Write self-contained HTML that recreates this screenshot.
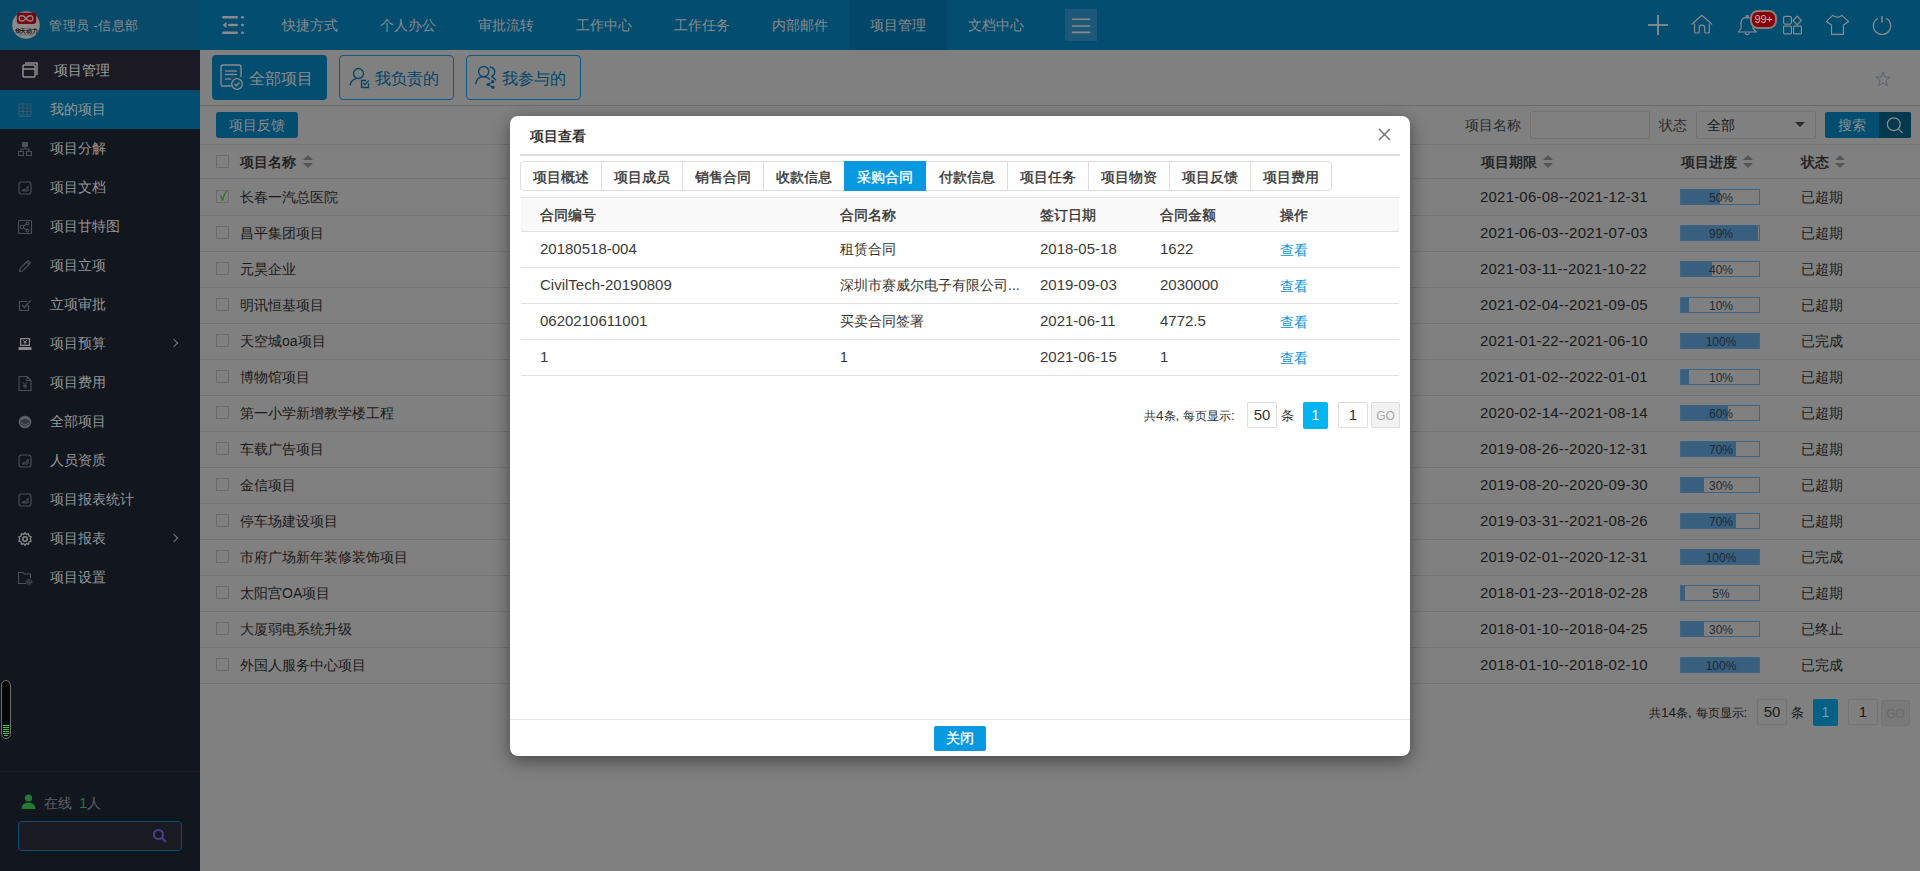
<!DOCTYPE html><html><head><meta charset="utf-8"><style>
*{box-sizing:border-box;margin:0;padding:0}
html,body{width:1920px;height:871px;overflow:hidden;background:#808080;font-family:"Liberation Sans",sans-serif;font-size:14px;color:#1a1a1a}
.a{position:absolute}
.nav{position:absolute;top:0;height:50px;width:98px;line-height:50px;text-align:center;color:#8a8a8a;font-size:14px}
.si{position:absolute;left:0;width:200px;height:39px;color:#969696;font-size:14px}
.si span{position:absolute;left:50px;top:0;line-height:39px}
.si svg{position:absolute;left:18px;top:13px}
.si .arr{position:absolute;left:171px;top:16px;width:6px;height:6px;border-right:1.5px solid #7a7a7a;border-top:1.5px solid #7a7a7a;transform:rotate(45deg)}
.hl{position:absolute;left:200px;width:1720px;height:1px;background:#737373}
.cb{position:absolute;width:13px;height:13px;border:1px solid #6b6b6b}
.row{position:absolute;left:200px;width:1720px;height:36px}
.row .n{position:absolute;left:40px;top:1px;line-height:36px}
.row .d{position:absolute;left:1280px;top:1px;line-height:36px;font-size:15px;letter-spacing:0.2px}
.row .s{position:absolute;left:1601px;top:1px;line-height:36px}
.row .cb{left:16px;top:12px}
.pb{position:absolute;left:1480px;top:11px;width:80px;height:16px;border:1px solid #3d6485}
.pb i{position:absolute;left:0;top:0;bottom:0;background:#385f7e}
.pb b{position:absolute;left:2px;right:0;top:1px;line-height:14px;text-align:center;font-weight:normal;font-size:12px;color:#1f2a33}
.sort{position:absolute;width:8px;height:14px}
.sort:before{content:"";position:absolute;left:0;top:0;border-left:5px solid transparent;border-right:5px solid transparent;border-bottom:5px solid #565656}
.sort:after{content:"";position:absolute;left:0;top:8px;border-left:5px solid transparent;border-right:5px solid transparent;border-top:5px solid #565656}
.th{position:absolute;top:1px;line-height:34px;color:#1a1a1a;-webkit-text-stroke:0.4px #1a1a1a}
#modal{position:absolute;left:510px;top:116px;width:900px;height:640px;background:#fff;border-radius:8px;box-shadow:0 5px 18px rgba(0,0,0,.45)}
.tab{position:absolute;top:0;height:29px;line-height:31px;text-align:center;color:#333;font-size:14px;-webkit-text-stroke:0.35px #333}
.mrow{position:absolute;left:11px;width:878px;height:36px;border-bottom:1px solid #e2e2e2;color:#333}
.mrow div{position:absolute;top:0;line-height:35px;font-size:15px}
.mrow .c1{left:19px;top:-1px!important;color:#3a3a3a}.mrow .c2{left:319px;font-size:14px}.mrow .c3{left:519px;top:-1px!important;color:#3a3a3a}.mrow .c4{left:639px;top:-1px!important;color:#3a3a3a}.mrow .c5{left:759px;top:1px!important;color:#0b96dd;font-size:14px}
.box{position:absolute;border:1px solid #ddd;border-radius:2px;text-align:center}
</style></head><body>
<div class="a" style="left:0;top:0;width:1920px;height:50px;background:#024d70"></div>
<div class="a" style="left:0;top:0;width:200px;height:50px;background:#084a6a"></div>
<svg class="a" style="left:12px;top:11px" width="28" height="28" viewBox="0 0 28 28">
<circle cx="14" cy="14" r="13.8" fill="#8a8a8a"/>
<rect x="4.8" y="1.8" width="19.4" height="11.2" rx="3" fill="#7a0512"/>
<path d="M14 7.4 C12 4.2 7.2 3.6 7.2 7.4 C7.2 11.2 12 10.6 14 7.4 C16 4.2 20.8 3.6 20.8 7.4 C20.8 11.2 16 10.6 14 7.4 Z" fill="none" stroke="#8c8a8a" stroke-width="1.4"/>
<text x="14" y="21.5" text-anchor="middle" font-size="6" font-weight="bold" fill="#161616" letter-spacing="-0.3">华天动力</text>
<rect x="7" y="23.2" width="14" height="1.3" fill="#5a5a5a" opacity=".6"/>
</svg>
<div class="a" style="left:49px;top:1px;line-height:50px;color:#8c8c8c;font-size:13px;letter-spacing:0.5px">管理员 -信息部</div>
<svg class="a" style="left:222px;top:16px" width="22" height="18" viewBox="0 0 22 18"><g fill="#8a8a8a"><rect x="0" y="0" width="16" height="2.6" rx="1.3"/><rect x="19" y="0" width="3" height="2.6" rx="1.3"/><rect x="6" y="7.7" width="10" height="2.6" rx="1.3"/><path d="M0.5 9 L4.5 6 L4.5 12 Z"/><rect x="19" y="7.7" width="3" height="2.6" rx="1.3"/><rect x="0" y="15.4" width="16" height="2.6" rx="1.3"/><rect x="19" y="15.4" width="3" height="2.6" rx="1.3"/></g></svg>
<div class="nav" style="left:261px;">快捷方式</div>
<div class="nav" style="left:359px;">个人办公</div>
<div class="nav" style="left:457px;">审批流转</div>
<div class="nav" style="left:555px;">工作中心</div>
<div class="nav" style="left:653px;">工作任务</div>
<div class="nav" style="left:751px;">内部邮件</div>
<div class="nav" style="left:849px;background:#02476a;">项目管理</div>
<div class="nav" style="left:947px;">文档中心</div>
<div class="a" style="left:1065px;top:9px;width:32px;height:32px;background:#1e5878"></div>
<svg class="a" style="left:1065px;top:9px" width="32" height="32" viewBox="1065 9 32 32"><g stroke="#8a8a8a" stroke-width="1.6" stroke-linecap="round"><line x1="1072.5" y1="19.3" x2="1089.7" y2="19.3"/><line x1="1072.5" y1="26" x2="1089.7" y2="26"/><line x1="1072.5" y1="32.4" x2="1089.7" y2="32.4"/></g></svg>
<svg class="a" style="left:1640px;top:5px" width="270" height="40" viewBox="1640 5 270 40">
<g fill="none" stroke="#8c8c8c" stroke-width="1.2" stroke-linejoin="round">
<line x1="1648" y1="25" x2="1668" y2="25" stroke-width="1.8"/><line x1="1658" y1="15" x2="1658" y2="35" stroke-width="1.8"/>
<path d="M1691.6 24.5 L1701.9 15.3 L1712.2 24.5"/>
<path d="M1694.6 23.5 V32 Q1694.6 33 1695.6 33 H1698.2 Q1699.2 33 1699.2 32 V27.8 Q1699.2 25.2 1701.9 25.2 Q1704.7 25.2 1704.7 27.8 V32 Q1704.7 33 1705.7 33 H1708.3 Q1709.3 33 1709.3 32 V23.5"/>
<path d="M1738.5 32 L1741 28.5 V23 Q1741 17.5 1747 17.3 Q1753 17.5 1753 23 V28.5 L1756.3 32 Z"/>
<path d="M1745 32.5 Q1745.5 34.6 1747.2 34.6 Q1749 34.6 1749.4 32.5"/>
<circle cx="1747.2" cy="16.3" r="1"/>
<rect x="1783.6" y="16.3" width="7.8" height="7.8" rx="1.5"/>
<path d="M1797.2 16.2 L1801.4 20.5 L1797.2 24.8 L1793 20.5 Z" stroke-linejoin="round"/>
<rect x="1783.6" y="26.2" width="7.8" height="7.6" rx="0.8"/>
<rect x="1793.6" y="26.2" width="7.8" height="7.6" rx="0.8"/>
<path d="M1832.8 15.4 Q1837.3 19 1841.8 15.4 L1848.6 21.4 L1843.4 25 V34.4 H1831.5 V25 L1826.4 21.4 Z"/>
<path d="M1877.8 18.2 A8.7 8.7 0 1 0 1886.3 18.2"/><line x1="1882" y1="16" x2="1882" y2="22.6" stroke-width="1.5"/>
</g></svg>
<div class="a" style="left:1750px;top:10px;width:27px;height:19px;border-radius:8px;background:#860008;border:2px solid #8a7c7c"></div>
<div class="a" style="left:1751px;top:11px;width:25px;line-height:16px;text-align:center;color:#c8bcbc;font-size:11px;letter-spacing:-0.2px">99+</div>
<div class="a" style="left:0;top:50px;width:200px;height:821px;background:#12161e"></div>
<div class="a" style="left:0;top:50px;width:200px;height:40px;background:#1b1a24"></div>
<div class="a" style="left:0;top:90px;width:200px;height:39px;background:#024d70"></div>
<div class="si" style="top:50px;height:40px;color:#a0a0a0"><span style="left:54px;line-height:40px">项目管理</span><svg style="left:22px;top:12px" width="16" height="16" viewBox="0 0 16 16"><g fill="none" stroke="#8f8f8f" stroke-width="1.5"><rect x="1" y="3" width="12" height="12" rx="1"/><path d="M3 1 H15 V13"/><line x1="1" y1="7" x2="13" y2="7"/></g></svg></div>
<div class="si" style="top:90px"><svg width="15" height="15" viewBox="0 0 15 15"><g fill="none" stroke="#3a5a6c" stroke-width="0.9"><rect x="1" y="1" width="12" height="11"/><line x1="5" y1="1" x2="5" y2="12"/><line x1="9" y1="1" x2="9" y2="12"/><line x1="1" y1="5" x2="13" y2="5"/><line x1="1" y1="8.5" x2="13" y2="8.5"/><line x1="1" y1="13.5" x2="13" y2="13.5"/></g></svg><span>我的项目</span></div>
<div class="si" style="top:129px"><svg width="15" height="15" viewBox="0 0 15 15"><g fill="none" stroke="#4b5058" stroke-width="1.1"><rect x="4.5" y="0.5" width="5" height="4" fill="#4b5058"/><path d="M7 4.5 V7 M3 10 V7 H11 V10"/><rect x="0.5" y="9.5" width="5" height="4"/><rect x="8.5" y="9.5" width="5" height="4"/></g></svg><span>项目分解</span></div>
<div class="si" style="top:168px"><svg width="15" height="15" viewBox="0 0 15 15"><g fill="none" stroke="#4b5058" stroke-width="1.1"><rect x="1" y="1" width="12" height="12" rx="2.5"/><path d="M4 10 L6 8 L7.5 9 L10 5 M10 5 V10 M4 10 H10" stroke-width="1"/></g></svg><span>项目文档</span></div>
<div class="si" style="top:207px"><svg width="15" height="15" viewBox="0 0 15 15"><g fill="none" stroke="#4b5058" stroke-width="1.1"><rect x="0.5" y="0.5" width="13" height="13" rx="1"/><circle cx="4" cy="7" r="1.8"/><circle cx="9.5" cy="3.5" r="1.4"/><circle cx="9.5" cy="10.5" r="1.4"/><path d="M5.5 6 L8.3 4.2 M5.5 8 L8.3 9.8"/></g></svg><span>项目甘特图</span></div>
<div class="si" style="top:246px"><svg width="15" height="15" viewBox="0 0 15 15"><g fill="none" stroke="#4b5058" stroke-width="1.1"><path d="M1.5 12.5 L2 9.5 L10 1.5 L12.5 4 L4.5 12 Z M8.5 3 L11 5.5"/></g></svg><span>项目立项</span></div>
<div class="si" style="top:285px"><svg width="15" height="15" viewBox="0 0 15 15"><g fill="none" stroke="#4b5058" stroke-width="1.2"><path d="M10.5 7 V12.5 H1.5 V3.5 H9"/><path d="M4 7 L6.5 9.5 L12.5 2.5"/></g></svg><span>立项审批</span></div>
<div class="si" style="top:324px"><svg width="15" height="15" viewBox="0 0 15 15"><g fill="#8a8a8a"><path d="M2 1 H12 V9 H2 Z M3.2 2.2 V7.8 H10.8 V2.2 Z"/><path d="M0.5 10 H13.5 V13 H0.5 Z"/><path d="M5 3 L7 5 L9 3 M7 5 V7.5 M5.5 5.5 H8.5" stroke="#8a8a8a" stroke-width="0.9" fill="none"/></g></svg><span>项目预算</span><div class="arr"></div></div>
<div class="si" style="top:363px"><svg width="15" height="15" viewBox="0 0 15 15"><g fill="none" stroke="#4b5058" stroke-width="1.1"><path d="M1 0.5 H9 L13 4.5 V14.5 H1 Z M9 0.5 V4.5 H13"/><path d="M4.5 6 L7 8.5 L9.5 6 M7 8.5 V12.5 M5 9.5 H9 M5 11 H9" stroke-width="0.9"/></g></svg><span>项目费用</span></div>
<div class="si" style="top:402px"><svg width="15" height="15" viewBox="0 0 15 15"><g><circle cx="7" cy="7" r="6.3" fill="#5a5e66"/><path d="M1.5 6.5 L7 3.5 L12.5 6.5 L7 9.5 Z" fill="#12161e" opacity=".55"/><path d="M2 8.5 L7 11 L12 8.5" fill="none" stroke="#12161e" stroke-width="0.9" opacity=".6"/></g></svg><span>全部项目</span></div>
<div class="si" style="top:441px"><svg width="15" height="15" viewBox="0 0 15 15"><g fill="none" stroke="#4b5058" stroke-width="1.1"><rect x="1" y="1" width="12" height="12" rx="2.5"/><path d="M4 10 L6 8 L7.5 9 L10 5 M10 5 V10 M4 10 H10" stroke-width="1"/></g></svg><span>人员资质</span></div>
<div class="si" style="top:480px"><svg width="15" height="15" viewBox="0 0 15 15"><g fill="none" stroke="#4b5058" stroke-width="1.1"><rect x="1" y="1" width="12" height="12" rx="2.5"/><path d="M4 10 L6 8 L7.5 9 L10 5 M10 5 V10 M4 10 H10" stroke-width="1"/></g></svg><span>项目报表统计</span></div>
<div class="si" style="top:519px"><svg width="15" height="15" viewBox="0 0 15 15"><g fill="none" stroke="#8a8a8a" stroke-width="1.6"><circle cx="7" cy="7" r="2.2"/><path d="M7 0.8 L8.3 2.3 L10.5 1.8 L11 4 L13.1 4.8 L12.3 7 L13.1 9.2 L11 10 L10.5 12.2 L8.3 11.7 L7 13.2 L5.7 11.7 L3.5 12.2 L3 10 L0.9 9.2 L1.7 7 L0.9 4.8 L3 4 L3.5 1.8 L5.7 2.3 Z" stroke-width="1.3"/></g></svg><span>项目报表</span><div class="arr"></div></div>
<div class="si" style="top:558px"><svg width="15" height="15" viewBox="0 0 15 15"><g fill="none" stroke="#4b5058" stroke-width="1.1"><path d="M8 12.5 H0.5 V1.5 H5 L6.5 3 H12.5 V7"/><circle cx="11" cy="11" r="1.3"/><path d="M11 7.6 V8.8 M11 13.2 V14.4 M7.6 11 H8.8 M13.2 11 H14.4 M8.6 8.6 L9.4 9.4 M12.6 12.6 L13.4 13.4 M8.6 13.4 L9.4 12.6 M12.6 9.4 L13.4 8.6" stroke-width="1.3"/></g></svg><span>项目设置</span></div>
<div class="a" style="left:1px;top:680px;width:10px;height:59px;border:1.5px solid #6e6e6e;border-radius:5px;background:#050608"></div>
<div class="a" style="left:3px;top:725px;width:6px;height:1px;background:#3cc850"></div>
<div class="a" style="left:3px;top:727px;width:6px;height:1px;background:#3cc850"></div>
<div class="a" style="left:3px;top:729px;width:6px;height:1px;background:#3cc850"></div>
<div class="a" style="left:3px;top:731px;width:6px;height:1px;background:#3cc850"></div>
<div class="a" style="left:3px;top:733px;width:6px;height:1px;background:#3cc850"></div>
<div class="a" style="left:4px;top:735px;width:4px;height:1px;background:#3cc850"></div>
<div class="a" style="left:0;top:771px;width:200px;height:1px;background:#1e1a22"></div>
<svg class="a" style="left:21px;top:794px" width="15" height="15" viewBox="0 0 15 15"><circle cx="7.5" cy="4" r="3.6" fill="#237a32"/><path d="M0.5 15 Q0.5 8.5 7.5 8.5 Q14.5 8.5 14.5 15 Z" fill="#237a32"/></svg>
<div class="a" style="left:44px;top:794px;line-height:18px;color:#5c5f66;font-size:14px">在线 <span style="color:#237a32;font-size:15px;margin-left:3px">1</span>人</div>
<div class="a" style="left:18px;top:821px;width:164px;height:30px;border:1px solid #08507a;border-radius:4px;background:#1a1a22"></div>
<svg class="a" style="left:152px;top:828px" width="16" height="16" viewBox="0 0 16 16"><circle cx="6.5" cy="6.5" r="4.6" fill="none" stroke="#4a3f8a" stroke-width="2"/><line x1="10" y1="10" x2="14" y2="14" stroke="#4a3f8a" stroke-width="2.2"/></svg>
<div class="a" style="left:212px;top:55px;width:115px;height:45px;border-radius:4px;background:#024d70"></div>
<div class="a" style="left:339px;top:55px;width:115px;height:45px;border-radius:4px;border:1.3px solid #0a5b85"></div>
<div class="a" style="left:466px;top:55px;width:115px;height:45px;border-radius:4px;border:1.3px solid #0a5b85"></div>
<div class="a" style="left:249px;top:56px;line-height:45px;font-size:16px;color:#8c8c8c">全部项目</div>
<div class="a" style="left:375px;top:56px;line-height:45px;font-size:16px;color:#02466a">我负责的</div>
<div class="a" style="left:502px;top:56px;line-height:45px;font-size:16px;color:#02466a">我参与的</div>
<svg class="a" style="left:219px;top:63px" width="28" height="28" viewBox="0 0 28 28"><g fill="none" stroke="#8c8c8c" stroke-width="1.3"><path d="M12.5 23 H4 Q2 23 2 21 V4 Q2 2 4 2 H20 Q22 2 22 4 V14"/><line x1="6" y1="8" x2="18" y2="8"/><line x1="6" y1="11.5" x2="18" y2="11.5"/><line x1="6" y1="16" x2="12" y2="16"/><circle cx="18" cy="21" r="5.3"/><path d="M15.5 21 L17.3 22.8 L20.5 19.5"/></g></svg>
<svg class="a" style="left:340px;top:60px" width="40" height="35" viewBox="340 60 40 35"><g fill="none" stroke="#02466a" stroke-width="1.3"><circle cx="358.5" cy="73.5" r="5"/><path d="M350 85.5 Q351 80 356 78.6"/><path d="M366.2 80.5 H361.5 V87.5 H368.5 V83.2"/><path d="M363.3 83.2 L364.8 84.7 L368.8 80.6"/></g></svg>
<svg class="a" style="left:466px;top:60px" width="40" height="35" viewBox="466 60 40 35"><g fill="none" stroke="#02466a" stroke-width="1.3"><circle cx="483.7" cy="71.6" r="5.1"/><path d="M475.8 84.2 Q476.5 76.8 483.7 76.7 Q487.5 76.8 490 79.8"/><path d="M489.7 67 Q494.8 67.8 494.8 72 Q494.6 75 491.7 76.6 L496.2 80.2"/><path d="M492.7 81.7 L488.1 84.5 L492.9 87.3" stroke-width="1"/></g><g fill="#02466a"><circle cx="492.7" cy="81.7" r="1.6"/><circle cx="488.1" cy="84.5" r="1.6"/><circle cx="492.9" cy="87.3" r="1.6"/></g></svg>
<div class="hl" style="top:105px;background:#6b6b6b"></div>
<svg class="a" style="left:1875px;top:71px" width="16" height="16" viewBox="0 0 16 16"><path d="M8 1 L10 6 L15 6.2 L11 9.5 L12.5 14.8 L8 11.8 L3.5 14.8 L5 9.5 L1 6.2 L6 6 Z" fill="none" stroke="#5c6470" stroke-width="1"/></svg>
<div class="a" style="left:216px;top:112px;width:82px;height:26px;border-radius:3px;background:#024d70;color:#8c8c8c;text-align:center;line-height:27px">项目反馈</div>
<div class="a" style="left:1465px;top:112px;line-height:27px;color:#2a2a2a">项目名称</div>
<div class="a" style="left:1530px;top:111px;width:120px;height:28px;border:1px solid #727272;border-radius:2px"></div>
<div class="a" style="left:1659px;top:112px;line-height:27px;color:#2a2a2a">状态</div>
<div class="a" style="left:1696px;top:111px;width:120px;height:28px;border:1px solid #727272;border-radius:2px"></div>
<div class="a" style="left:1707px;top:112px;line-height:26px;color:#1a1a1a">全部</div>
<div class="a" style="left:1795px;top:122px;border-left:5px solid transparent;border-right:5px solid transparent;border-top:5px solid #2a2a2a"></div>
<div class="a" style="left:1825px;top:112px;width:86px;height:26px;border-radius:2px;background:#024d70"></div>
<div class="a" style="left:1879px;top:112px;width:32px;height:26px;border-radius:0 2px 2px 0;background:#02394f"></div>
<div class="a" style="left:1838px;top:112px;line-height:26px;color:#8c8c8c">搜索</div>
<svg class="a" style="left:1886px;top:116px" width="18" height="19" viewBox="0 0 18 19"><circle cx="7.8" cy="8.2" r="6.4" fill="none" stroke="#8c8c8c" stroke-width="1.2"/><line x1="12.5" y1="12.9" x2="16.5" y2="17" stroke="#8c8c8c" stroke-width="1.2"/></svg>
<div class="hl" style="top:144px"></div>
<div class="row" style="top:144px;height:34px">
<div class="cb" style="left:16px;top:11px"></div>
<div class="th" style="left:40px">项目名称</div><div class="sort" style="left:103px;top:11px"></div>
<div class="th" style="left:1281px">项目期限</div><div class="sort" style="left:1343px;top:11px"></div>
<div class="th" style="left:1481px">项目进度</div><div class="sort" style="left:1543px;top:11px"></div>
<div class="th" style="left:1601px">状态</div><div class="sort" style="left:1635px;top:11px"></div>
</div>
<div class="hl" style="top:178px"></div>
<div class="row" style="top:178px"><div class="cb"><svg style="position:absolute;left:1px;top:-1px" width="11" height="13" viewBox="0 0 11 13"><path d="M2.2 6.2 Q3.4 5.6 4.6 10.6 Q6 4 8.6 0.8" fill="none" stroke="#2c7412" stroke-width="1.2"/></svg></div><div class="n">长春一汽总医院</div><div class="d">2021-06-08--2021-12-31</div><div class="pb"><i style="width:39.0px"></i><b>50%</b></div><div class="s">已超期</div></div>
<div class="hl" style="top:215px"></div>
<div class="row" style="top:214px"><div class="cb"></div><div class="n">昌平集团项目</div><div class="d">2021-06-03--2021-07-03</div><div class="pb"><i style="width:77.2px"></i><b>99%</b></div><div class="s">已超期</div></div>
<div class="hl" style="top:251px"></div>
<div class="row" style="top:250px"><div class="cb"></div><div class="n">元昊企业</div><div class="d">2021-03-11--2021-10-22</div><div class="pb"><i style="width:31.2px"></i><b>40%</b></div><div class="s">已超期</div></div>
<div class="hl" style="top:287px"></div>
<div class="row" style="top:286px"><div class="cb"></div><div class="n">明讯恒基项目</div><div class="d">2021-02-04--2021-09-05</div><div class="pb"><i style="width:7.8px"></i><b>10%</b></div><div class="s">已超期</div></div>
<div class="hl" style="top:323px"></div>
<div class="row" style="top:322px"><div class="cb"></div><div class="n">天空城oa项目</div><div class="d">2021-01-22--2021-06-10</div><div class="pb"><i style="width:78.0px"></i><b>100%</b></div><div class="s">已完成</div></div>
<div class="hl" style="top:359px"></div>
<div class="row" style="top:358px"><div class="cb"></div><div class="n">博物馆项目</div><div class="d">2021-01-02--2022-01-01</div><div class="pb"><i style="width:7.8px"></i><b>10%</b></div><div class="s">已超期</div></div>
<div class="hl" style="top:395px"></div>
<div class="row" style="top:394px"><div class="cb"></div><div class="n">第一小学新增教学楼工程</div><div class="d">2020-02-14--2021-08-14</div><div class="pb"><i style="width:46.8px"></i><b>60%</b></div><div class="s">已超期</div></div>
<div class="hl" style="top:431px"></div>
<div class="row" style="top:430px"><div class="cb"></div><div class="n">车载广告项目</div><div class="d">2019-08-26--2020-12-31</div><div class="pb"><i style="width:54.6px"></i><b>70%</b></div><div class="s">已超期</div></div>
<div class="hl" style="top:467px"></div>
<div class="row" style="top:466px"><div class="cb"></div><div class="n">金信项目</div><div class="d">2019-08-20--2020-09-30</div><div class="pb"><i style="width:23.4px"></i><b>30%</b></div><div class="s">已超期</div></div>
<div class="hl" style="top:503px"></div>
<div class="row" style="top:502px"><div class="cb"></div><div class="n">停车场建设项目</div><div class="d">2019-03-31--2021-08-26</div><div class="pb"><i style="width:54.6px"></i><b>70%</b></div><div class="s">已超期</div></div>
<div class="hl" style="top:539px"></div>
<div class="row" style="top:538px"><div class="cb"></div><div class="n">市府广场新年装修装饰项目</div><div class="d">2019-02-01--2020-12-31</div><div class="pb"><i style="width:78.0px"></i><b>100%</b></div><div class="s">已完成</div></div>
<div class="hl" style="top:575px"></div>
<div class="row" style="top:574px"><div class="cb"></div><div class="n">太阳宫OA项目</div><div class="d">2018-01-23--2018-02-28</div><div class="pb"><i style="width:3.9px"></i><b>5%</b></div><div class="s">已超期</div></div>
<div class="hl" style="top:611px"></div>
<div class="row" style="top:610px"><div class="cb"></div><div class="n">大厦弱电系统升级</div><div class="d">2018-01-10--2018-04-25</div><div class="pb"><i style="width:23.4px"></i><b>30%</b></div><div class="s">已终止</div></div>
<div class="hl" style="top:647px"></div>
<div class="row" style="top:646px"><div class="cb"></div><div class="n">外国人服务中心项目</div><div class="d">2018-01-10--2018-02-10</div><div class="pb"><i style="width:78.0px"></i><b>100%</b></div><div class="s">已完成</div></div>
<div class="hl" style="top:683px"></div>
<div class="a" style="left:1649px;top:704px;line-height:18px;font-size:12px;color:#1a1a1a">共<span style="font-size:13.5px">14</span>条<span style="font-size:13.5px">, </span>每页显示<span style="font-size:13.5px">:</span></div>
<div class="box" style="left:1757px;top:699px;width:30px;height:26px;border-color:#747474;line-height:24px;font-size:15px;color:#1a1a1a">50</div>
<div class="a" style="left:1791px;top:704px;line-height:18px;font-size:13px;color:#1a1a1a">条</div>
<div class="box" style="left:1813px;top:699px;width:25px;height:27px;border:none;background:#026185;line-height:27px;font-size:14px;color:#7c9aa8">1</div>
<div class="box" style="left:1848px;top:699px;width:30px;height:26px;border-color:#747474;line-height:24px;font-size:15px;color:#1a1a1a">1</div>
<div class="box" style="left:1881px;top:700px;width:29px;height:26px;border-color:#747474;background:#797979;line-height:26px;font-size:12px;color:#6a6a6a">GO</div>
<div id="modal">
<div class="a" style="left:20px;top:0;line-height:40px;font-size:14px;color:#222;-webkit-text-stroke:0.4px #222">项目查看</div>
<svg class="a" style="left:868px;top:12px" width="13" height="13" viewBox="0 0 13 13"><path d="M1 1 L12 12 M12 1 L1 12" stroke="#747474" stroke-width="1.5"/></svg>
<div class="a" style="left:10px;top:38px;width:880px;height:2px;background:#ddd"></div>
<div class="a" style="left:10px;top:45px;width:812px;height:30px;border:1px solid #ddd;border-radius:4px"></div>
<div class="tab" style="left:10px;top:46px;width:81px;">项目概述</div>
<div class="tab" style="left:91px;top:46px;width:81px;">项目成员</div>
<div class="a" style="left:91px;top:46px;width:1px;height:29px;background:#ddd"></div>
<div class="tab" style="left:172px;top:46px;width:81px;">销售合同</div>
<div class="a" style="left:172px;top:46px;width:1px;height:29px;background:#ddd"></div>
<div class="tab" style="left:253px;top:46px;width:81px;">收款信息</div>
<div class="a" style="left:253px;top:46px;width:1px;height:29px;background:#ddd"></div>
<div class="tab" style="left:334px;top:45px;width:82px;height:30px;line-height:32px;background:#0899e0;color:#fff;-webkit-text-stroke:0.35px #fff">采购合同</div>
<div class="tab" style="left:416px;top:46px;width:81px;">付款信息</div>
<div class="tab" style="left:497px;top:46px;width:81px;">项目任务</div>
<div class="a" style="left:497px;top:46px;width:1px;height:29px;background:#ddd"></div>
<div class="tab" style="left:578px;top:46px;width:81px;">项目物资</div>
<div class="a" style="left:578px;top:46px;width:1px;height:29px;background:#ddd"></div>
<div class="tab" style="left:659px;top:46px;width:81px;">项目反馈</div>
<div class="a" style="left:659px;top:46px;width:1px;height:29px;background:#ddd"></div>
<div class="tab" style="left:740px;top:46px;width:81px;">项目费用</div>
<div class="a" style="left:740px;top:46px;width:1px;height:29px;background:#ddd"></div>
<div class="a" style="left:11px;top:81px;width:878px;height:35px;background:#f9f9f9;border-top:1px solid #e2e2e2;border-bottom:1px solid #e2e2e2"></div>
<div class="a" style="left:30px;top:82px;line-height:35px;color:#333;-webkit-text-stroke:0.35px #333">合同编号</div>
<div class="a" style="left:330px;top:82px;line-height:35px;color:#333;-webkit-text-stroke:0.35px #333">合同名称</div>
<div class="a" style="left:530px;top:82px;line-height:35px;color:#333;-webkit-text-stroke:0.35px #333">签订日期</div>
<div class="a" style="left:650px;top:82px;line-height:35px;color:#333;-webkit-text-stroke:0.35px #333">合同金额</div>
<div class="a" style="left:770px;top:82px;line-height:35px;color:#333;-webkit-text-stroke:0.35px #333">操作</div>
<div class="mrow" style="top:116px"><div class="c1">20180518-004</div><div class="c2">租赁合同</div><div class="c3">2018-05-18</div><div class="c4">1622</div><div class="c5">查看</div></div>
<div class="mrow" style="top:152px"><div class="c1">CivilTech-20190809</div><div class="c2">深圳市赛威尔电子有限公司...</div><div class="c3">2019-09-03</div><div class="c4">2030000</div><div class="c5">查看</div></div>
<div class="mrow" style="top:188px"><div class="c1">0620210611001</div><div class="c2">买卖合同签署</div><div class="c3">2021-06-11</div><div class="c4">4772.5</div><div class="c5">查看</div></div>
<div class="mrow" style="top:224px"><div class="c1">1</div><div class="c2">1</div><div class="c3">2021-06-15</div><div class="c4">1</div><div class="c5">查看</div></div>
<div class="a" style="left:634px;top:291px;line-height:18px;font-size:12px;color:#333">共<span style="font-size:13.5px">4</span>条<span style="font-size:13.5px">, </span>每页显示<span style="font-size:13.5px">:</span></div>
<div class="box" style="left:737px;top:286px;width:30px;height:26px;line-height:24px;font-size:15px;color:#333">50</div>
<div class="a" style="left:771px;top:291px;line-height:18px;font-size:13px;color:#333">条</div>
<div class="box" style="left:793px;top:286px;width:25px;height:27px;border:none;background:#04b4f0;line-height:27px;font-size:14px;color:#fff">1</div>
<div class="box" style="left:828px;top:286px;width:30px;height:26px;line-height:24px;font-size:15px;color:#333">1</div>
<div class="box" style="left:861px;top:286px;width:29px;height:26px;background:#f2f2f2;line-height:26px;font-size:12px;color:#aaa">GO</div>
<div class="a" style="left:0;top:603px;width:900px;height:1px;background:#e5e5e5"></div>
<div class="a" style="left:424px;top:610px;width:52px;height:25px;border-radius:2px;background:#0899e0;color:#fff;text-align:center;line-height:25px;font-size:14px;-webkit-text-stroke:0.3px #fff">关闭</div>
</div>
</body></html>
